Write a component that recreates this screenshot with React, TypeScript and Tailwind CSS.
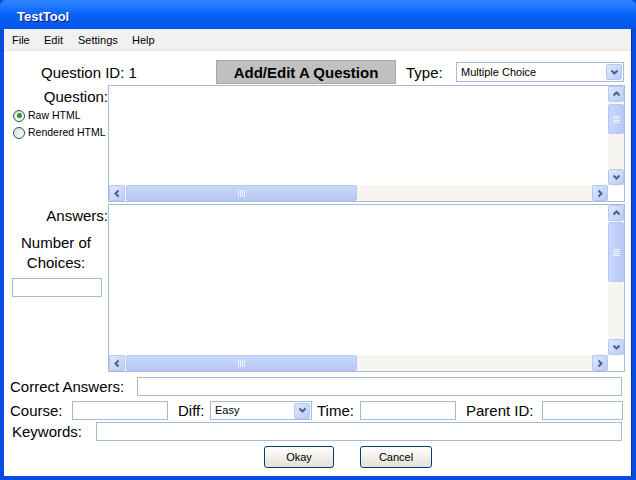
import React from "react";

const Chevron: React.FC<{ dir: "up" | "down" | "left" | "right" }> = ({ dir }) => {
  const pts: Record<string, string> = {
    up: "1.5,5.5 4.5,2.5 7.5,5.5",
    down: "1.5,2.5 4.5,5.5 7.5,2.5",
    left: "5.5,1.5 2.5,4.5 5.5,7.5",
    right: "2.5,1.5 5.5,4.5 2.5,7.5",
  };
  return (
    <svg width="9" height="9" viewBox="0 0 9 9">
      <polyline points={pts[dir]} fill="none" stroke="#4d6185" strokeWidth="2" />
    </svg>
  );
};

const ArrowBtn: React.FC<{ dir: "up" | "down" | "left" | "right" }> = ({ dir }) => (
  <div className="w-[16px] h-[16px] flex items-center justify-center rounded-[2px] border border-[#b7c8f0] bg-gradient-to-br from-[#dfe8fd] to-[#b9cbf7]">
    <Chevron dir={dir} />
  </div>
);

const VScroll: React.FC<{ thumbTop: number; thumbH: number }> = ({ thumbTop, thumbH }) => (
  <div className="w-[16px] h-full flex flex-col bg-[#f6f5f0]">
    <ArrowBtn dir="up" />
    <div className="flex-1 relative">
      <div
        className="absolute left-0 w-[16px] rounded-[2px] border border-[#b4c6f1] bg-gradient-to-r from-[#c9d8fc] to-[#b6c8f5] flex flex-col items-center justify-center gap-[1px]"
        style={{ top: thumbTop, height: thumbH }}
      >
        <div className="w-[7px] h-px bg-[#eef3fe]" />
        <div className="w-[7px] h-px bg-[#eef3fe]" />
        <div className="w-[7px] h-px bg-[#eef3fe]" />
        <div className="w-[7px] h-px bg-[#eef3fe]" />
      </div>
    </div>
    <ArrowBtn dir="down" />
  </div>
);

const HScroll: React.FC = () => (
  <div className="h-[16px] flex bg-[#f6f5f0]">
    <ArrowBtn dir="left" />
    <div className="flex-1 relative">
      <div className="absolute top-0 left-[1px] w-[231px] h-[16px] rounded-[2px] border border-[#b4c6f1] bg-gradient-to-b from-[#c9d8fc] to-[#b6c8f5] flex items-center justify-center gap-[1px]">
        <div className="w-px h-[7px] bg-[#eef3fe]" />
        <div className="w-px h-[7px] bg-[#eef3fe]" />
        <div className="w-px h-[7px] bg-[#eef3fe]" />
        <div className="w-px h-[7px] bg-[#eef3fe]" />
      </div>
    </div>
    <ArrowBtn dir="right" />
  </div>
);

const TextArea: React.FC<{ h: number; thumbTop: number; thumbH: number }> = ({ h, thumbTop, thumbH }) => (
  <div
    className="w-[517px] border border-[#a7bad6] bg-white grid grid-cols-[1fr_16px] grid-rows-[1fr_16px]"
    style={{ height: h }}
  >
    <div />
    <VScroll thumbTop={thumbTop} thumbH={thumbH} />
    <HScroll />
    <div className="bg-white" />
  </div>
);

const Select: React.FC<{ value: string; w: string; h: string }> = ({ value, w, h }) => (
  <div className={`${w} ${h} border border-[#a7bad6] bg-white flex items-center justify-between pl-[4px] pr-px`}>
    <span className="text-[11px] leading-[13px] text-black">{value}</span>
    <div className="w-[16px] h-[16px] flex items-center justify-center rounded-[2px] border border-[#b7c8f0] bg-gradient-to-br from-[#dfe8fd] to-[#b9cbf7]">
      <Chevron dir="down" />
    </div>
  </div>
);

const Input: React.FC<{ cls: string }> = ({ cls }) => (
  <div className={`${cls} h-[19px] border border-[#a7bad6] bg-white`} />
);

const Radio: React.FC<{ checked?: boolean; label: string }> = ({ checked, label }) => (
  <div className="flex items-center gap-[3px] h-[17px] whitespace-nowrap">
    <div className="w-[12px] h-[12px] shrink-0 rounded-full border border-[#1d5281] bg-gradient-to-br from-[#dcdcd5] to-white flex items-center justify-center">
      {checked && <div className="w-[5px] h-[5px] rounded-full bg-[#21a121]" />}
    </div>
    <span className="text-[10.5px] leading-[13px] text-black">{label}</span>
  </div>
);

const Button: React.FC<{ label: string; w: string }> = ({ label, w }) => (
  <div className={`${w} h-[22px] rounded-[3px] border border-[#003c74] bg-gradient-to-b from-white to-[#e3e0d4] flex items-center justify-center text-[11px] text-black`}>
    {label}
  </div>
);

export default function App() {
  return (
    <div className="w-[636px] h-[480px] bg-[#0a4be2] flex flex-col font-['Liberation_Sans',Arial,sans-serif] text-black">
      <div className="h-[29px] bg-gradient-to-b from-[#2f86ff] via-[#0864f8] to-[#0553e8] flex items-center pl-[17px] pt-[4px] rounded-t-[6px]">
        <span className="text-[13px] font-bold text-white [text-shadow:1px_1px_0_#0a1a8a]">TestTool</span>
      </div>
      <div className="flex-1 ml-[4px] mr-[4px] mb-[4px] bg-white flex flex-col border-r border-[#0730b8]">
        <div className="h-[22px] bg-[#f1f1f1] border-b border-[#ebe6d6] flex items-center pl-[8px] pt-px text-[11px]">
          <span className="w-[32px]">File</span>
          <span className="w-[34px]">Edit</span>
          <span className="w-[54px]">Settings</span>
          <span>Help</span>
        </div>

        <div className="mt-[9px] h-[24px] flex items-center leading-[17px]">
          <span className="ml-[37px] w-[175px] text-[15px]">Question ID: 1</span>
          <div className="w-[180px] h-[24px] bg-[#c0c0c0] border border-[#a7a7a7] flex items-center justify-center text-[15px] font-bold">
            Add/Edit A Question
          </div>
          <span className="ml-[10px] w-[50px] text-[15px]">Type:</span>
          <Select value="Multiple Choice" w="w-[168px]" h="h-[20px]" />
        </div>

        <div className="mt-px flex">
          <div className="w-[104px] flex flex-col">
            <span className="text-[15px] text-right leading-[17px] mt-[3px]">Question:</span>
            <div className="pl-[9px] mt-[2px] flex flex-col">
              <Radio checked label="Raw HTML" />
              <Radio label="Rendered HTML" />
            </div>
          </div>
          <TextArea h={117} thumbTop={2} thumbH={30} />
        </div>

        <div className="mt-[2px] flex">
          <div className="w-[104px] flex flex-col">
            <span className="text-[15px] text-right leading-[17px] mt-[3px]">Answers:</span>
            <span className="text-[15px] text-center leading-[20px] mt-[9px]">
              Number of
              <br />
              Choices:
            </span>
            <div className="ml-[8px] mt-[5px] w-[90px] h-[19px] border border-[#a7bad6]" />
          </div>
          <TextArea h={168} thumbTop={1} thumbH={60} />
        </div>

        <div className="mt-[5px] h-[19px] flex items-center mr-[9px] leading-[17px]">
          <span className="ml-[6px] w-[127px] text-[15px]">Correct Answers:</span>
          <Input cls="flex-1" />
        </div>

        <div className="mt-[5px] h-[19px] flex items-center leading-[17px]">
          <span className="ml-[6px] w-[62px] text-[15px]">Course:</span>
          <Input cls="w-[96px]" />
          <span className="ml-[10px] w-[32px] text-[15px]">Diff:</span>
          <Select value="Easy" w="w-[102px]" h="h-[19px]" />
          <span className="ml-[5px] w-[43px] text-[15px]">Time:</span>
          <Input cls="w-[96px]" />
          <span className="ml-[10px] w-[76px] text-[15px]">Parent ID:</span>
          <Input cls="w-[81px]" />
        </div>

        <div className="mt-[2px] h-[19px] flex items-center mr-[9px] leading-[17px]">
          <span className="ml-[8px] w-[84px] text-[15px]">Keywords:</span>
          <Input cls="flex-1" />
        </div>

        <div className="mt-[5px] flex pl-[260px] gap-[26px]">
          <Button label="Okay" w="w-[70px]" />
          <Button label="Cancel" w="w-[72px]" />
        </div>
      </div>
    </div>
  );
}
